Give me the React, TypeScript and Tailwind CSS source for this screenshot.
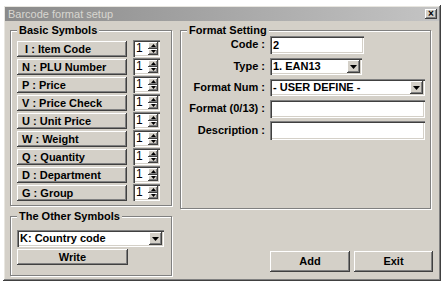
import React from "react";

const raised =
  "bg-[#d4d0c8] shadow-[inset_-1px_-1px_0_#404040,inset_1px_1px_0_#fff,inset_-2px_-2px_0_#808080,inset_2px_2px_0_#d4d0c8]";
const sunken =
  "bg-white shadow-[inset_1px_1px_0_#808080,inset_2px_2px_0_#404040,inset_-1px_-1px_0_#fff,inset_-2px_-2px_0_#d4d0c8]";

const symbols = [
  " I : Item Code",
  "N : PLU Number",
  "P : Price",
  "V : Price Check",
  "U : Unit Price",
  "W : Weight",
  "Q : Quantity",
  "D : Department",
  "G : Group",
];

const Arrow = ({ up }: { up?: boolean }) => (
  <svg width="5" height="3" viewBox="0 0 5 3">
    <path d={up ? "M2.5 0L5 3H0Z" : "M0 0H5L2.5 3Z"} fill="#000" />
  </svg>
);

const DropButton = () => (
  <div className={`${raised} w-[13px] h-[13px] flex items-center justify-center shrink-0`}>
    <svg width="7" height="4" viewBox="0 0 7 4">
      <path d="M0 0H7L3.5 4Z" fill="#000" />
    </svg>
  </div>
);

const Spin = () => (
  <div className={`${sunken} w-[27px] h-[17px] flex p-[2px]`}>
    <div className="flex-1 pl-[1px] leading-[13px] text-[12px] font-normal">1</div>
    <div className="flex flex-col w-[10px]">
      <div className={`${raised} flex-1 flex items-center justify-center`}>
        <Arrow up />
      </div>
      <div className={`${raised} flex-1 flex items-center justify-center`}>
        <Arrow />
      </div>
    </div>
  </div>
);

const Group = ({
  title,
  className,
  children,
}: {
  title: string;
  className?: string;
  children: React.ReactNode;
}) => (
  <fieldset
    className={`border border-[#808080] shadow-[inset_1px_1px_0_#fff,1px_1px_0_#fff] ${className ?? ""}`}
  >
    <legend className="ml-[6px] px-[2px] bg-[#d4d0c8] leading-[13px]">{title}</legend>
    {children}
  </fieldset>
);

const Field = ({
  label,
  className,
  children,
}: {
  label: string;
  className?: string;
  children: React.ReactNode;
}) => (
  <div className={`flex items-center ${className ?? "h-[21px]"}`}>
    <div className="w-[89px] text-right pr-[5px] whitespace-pre">{label}</div>
    {children}
  </div>
);

export default function App() {
  return (
    <div
      className="w-[445px] h-[285px] bg-white pt-[5px] pl-[3px] text-[11px] font-bold text-black"
      style={{ fontFamily: '"Liberation Sans", Arial, sans-serif' }}
    >
      <div className="w-[438px] h-[276px] bg-[#d4d0c8] p-[2px] shadow-[inset_-1px_-1px_0_#404040,inset_1px_1px_0_#fff,inset_-2px_-2px_0_#808080,inset_2px_2px_0_#e8e6e0] flex flex-col">
        <div className="h-[14px] bg-gradient-to-r from-[#8a8a8a] to-[#c4c4c4] flex items-center justify-between pl-[3px] pr-[2px]">
          <span className="font-normal text-[#d8d6d0] leading-none">Barcode format setup</span>
          <div className={`${raised} w-[12px] h-[10px] flex items-center justify-center text-[10px] leading-none`}>
            ×
          </div>
        </div>
        <div className="flex gap-[8px] pl-[5px] pt-[3px]">
          <div className="flex flex-col w-[162px] gap-[4px]">
            <Group title="Basic Symbols" className="h-[182px]">
              <div className="flex flex-col gap-[1px] pl-[6px] pt-[3px]">
                {symbols.map((s) => (
                  <div key={s} className="flex items-center gap-[6px] h-[17px]">
                    <div className={`${raised} w-[110px] h-[16px] pl-[5px] leading-[16px] whitespace-pre`}>
                      {s}
                    </div>
                    <Spin />
                  </div>
                ))}
              </div>
            </Group>
            <Group title="The Other Symbols" className="h-[66px]">
              <div className="pl-[6px] pt-[7px]">
                <div className={`${sunken} w-[147px] h-[17px] flex items-center pl-[3px] pr-[2px]`}>
                  <span className="flex-1">K: Country code</span>
                  <DropButton />
                </div>
                <div className={`${raised} mt-[2px] w-[111px] h-[16px] flex items-center justify-center`}>
                  Write
                </div>
              </div>
            </Group>
          </div>
          <div className="flex flex-col w-[251px]">
            <Group title="Format Setting" className="h-[185px]">
              <div className="flex flex-col -mt-[4px]">
                <Field label="Code :" className="h-[23px]">
                  <div className={`${sunken} w-[94px] h-[18px] pl-[3px] leading-[18px]`}>2</div>
                </Field>
                <Field label="Type :">
                  <div className={`${sunken} w-[92px] h-[17px] flex items-center pl-[3px] pr-[2px]`}>
                    <span className="flex-1">1. EAN13</span>
                    <DropButton />
                  </div>
                </Field>
                <Field label="Format Num :">
                  <div className={`${sunken} w-[155px] h-[17px] flex items-center pl-[3px] pr-[2px]`}>
                    <span className="flex-1">- USER DEFINE -</span>
                    <DropButton />
                  </div>
                </Field>
                <Field label="Format (0/13) :">
                  <div className={`${sunken} w-[155px] h-[18px]`} />
                </Field>
                <Field label="Description :" className="h-[22px]">
                  <div className={`${sunken} w-[155px] h-[19px]`} />
                </Field>
              </div>
            </Group>
            <div className="flex gap-[4px] justify-end mt-[42px] -mr-[2px]">
              <div className={`${raised} w-[80px] h-[21px] flex items-center justify-center`}>Add</div>
              <div className={`${raised} w-[79px] h-[21px] flex items-center justify-center`}>Exit</div>
            </div>
          </div>
        </div>
      </div>
    </div>
  );
}
